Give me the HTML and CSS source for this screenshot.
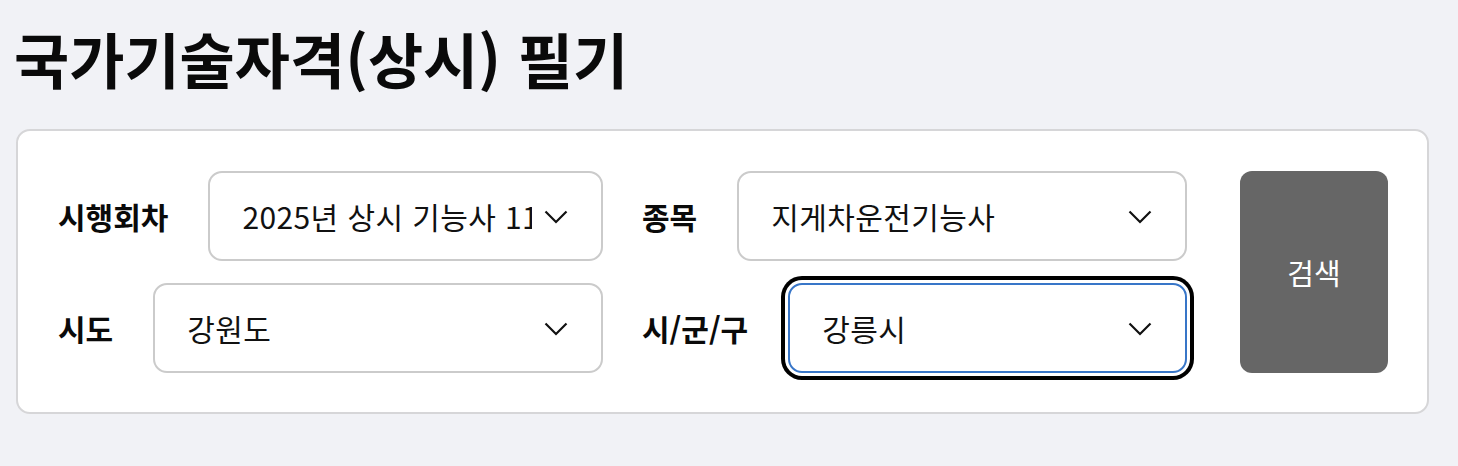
FILE: index.html
```html
<!DOCTYPE html>
<html lang="ko">
<head>
<meta charset="utf-8">
<title>국가기술자격(상시) 필기</title>
<link rel="stylesheet" href="styles.css">
</head>
<body>
<main class="page">
  <h1 class="page-title">국가기술자격(상시) 필기</h1>
  <form class="search-card">
    <div class="fields">
      <div class="field">
        <label class="field-label" for="round">시행회차</label>
        <div class="select-wrap">
          <select id="round" class="select">
            <option>2025년 상시 기능사 11회</option>
          </select>
          <svg class="chevron" viewBox="0 0 24 14" width="24" height="14" aria-hidden="true"><path d="M1.5 1.5 L12 12 L22.5 1.5" fill="none" stroke="#111" stroke-width="2.2"/></svg>
        </div>
      </div>
      <div class="field">
        <label class="field-label" for="item">종목</label>
        <div class="select-wrap">
          <select id="item" class="select">
            <option>지게차운전기능사</option>
          </select>
          <svg class="chevron" viewBox="0 0 24 14" width="24" height="14" aria-hidden="true"><path d="M1.5 1.5 L12 12 L22.5 1.5" fill="none" stroke="#111" stroke-width="2.2"/></svg>
        </div>
      </div>
      <div class="field">
        <label class="field-label" for="sido">시도</label>
        <div class="select-wrap">
          <select id="sido" class="select">
            <option>강원도</option>
          </select>
          <svg class="chevron" viewBox="0 0 24 14" width="24" height="14" aria-hidden="true"><path d="M1.5 1.5 L12 12 L22.5 1.5" fill="none" stroke="#111" stroke-width="2.2"/></svg>
        </div>
      </div>
      <div class="field">
        <label class="field-label" for="sigungu">시/군/구</label>
        <div class="select-wrap">
          <select id="sigungu" class="select is-focused">
            <option>강릉시</option>
          </select>
          <svg class="chevron" viewBox="0 0 24 14" width="24" height="14" aria-hidden="true"><path d="M1.5 1.5 L12 12 L22.5 1.5" fill="none" stroke="#111" stroke-width="2.2"/></svg>
        </div>
      </div>
    </div>
    <button type="button" class="search-btn">검색</button>
  </form>
</main>
</body>
</html>
```

FILE: styles.css
```css
html, body {
  margin: 0;
  padding: 0;
  background: #f1f2f6;
}

body {
  font-family: "Noto Sans CJK KR", "Noto Sans", sans-serif;
  color: #111;
}

.page {
  padding: 22px 29px 0 16px;
}

.page-title {
  margin: 0 0 35px -2px;
  font-size: 60px;
  line-height: 72px;
  font-weight: 700;
  color: #0a0a0a;
}

.search-card {
  display: flex;
  align-items: stretch;
  gap: 53px;
  background: #fff;
  border: 2px solid #d6d6d8;
  border-radius: 14px;
  padding: 40px 39px 39px 40px;
}

.fields {
  flex: 1;
  display: grid;
  grid-template-columns: 1fr 1fr;
  column-gap: 39px;
  row-gap: 22px;
}

.field {
  display: flex;
  align-items: center;
  gap: 40px;
}

.field-label {
  font-size: 30px;
  font-weight: 700;
  white-space: nowrap;
  color: #0a0a0a;
}

.select-wrap {
  position: relative;
  flex: 1;
  min-width: 0;
}

.select {
  display: block;
  width: 100%;
  height: 90px;
  box-sizing: border-box;
  appearance: none;
  -webkit-appearance: none;
  background: #fff;
  border: 2px solid #cbcbcb;
  border-radius: 14px;
  padding: 0 69px 0 32px;
  font-family: "Noto Sans CJK KR", "Noto Sans", sans-serif;
  font-size: 30px;
  letter-spacing: 0.4px;
  color: #111;
  outline: none;
}

.select.is-focused {
  border-color: #3876c8;
  box-shadow: 0 0 0 3px #fff, 0 0 0 7px #000;
}

.chevron {
  position: absolute;
  right: 35px;
  top: 50%;
  margin-top: -6px;
  pointer-events: none;
}

.search-btn {
  width: 148px;
  border: none;
  border-radius: 12px;
  background: #666;
  color: #fff;
  font-family: "Noto Sans CJK KR", "Noto Sans", sans-serif;
  font-size: 29px;
  cursor: pointer;
}
```
